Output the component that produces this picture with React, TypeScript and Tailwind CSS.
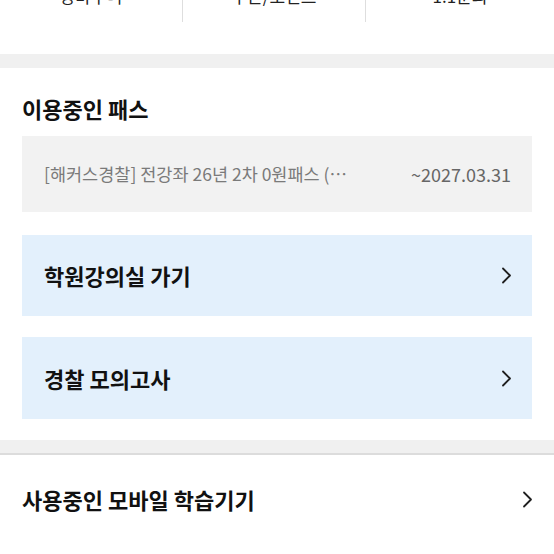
import React from "react";

const FONT = { fontFamily: '"Noto Sans CJK KR", "Noto Sans", sans-serif' };

function Chevron({ className = "" }: { className?: string }) {
  return (
    <svg width="11" height="17" viewBox="0 0 11 17" className={className} fill="none">
      <polyline points="2,1.5 9,8.5 2,15.5" stroke="#1f1f1f" strokeWidth="1.8" strokeLinecap="round" strokeLinejoin="round" />
    </svg>
  );
}

const TOP_MENU = [
  { label: "장바구니", w: "w-[182px]" },
  { label: "쿠폰/포인트", w: "w-[183px]" },
  { label: "1:1문의", w: "flex-1" },
];

export default function App() {
  return (
    <div className="w-[554px] h-[554px] overflow-hidden bg-white text-[#111]" style={FONT}>
      {/* top menu, scrolled past */}
      <div className="h-[54px] overflow-hidden bg-white">
        <div className="flex -mt-[14px]">
          {TOP_MENU.map((t, i) => (
            <div
              key={t.label}
              className={`${t.w} h-[36px] flex justify-center ${i > 0 ? "border-l border-[#dedede]" : ""}`}
            >
              <span className="text-[17px] leading-[20px] text-[#222]">{t.label}</span>
            </div>
          ))}
        </div>
      </div>
      <div className="h-[14px] bg-[#f0f0f0]" />

      {/* pass section */}
      <section className="px-[22px] pt-[25px] pb-[21px]">
        <h2 className="text-[22px] leading-[30px] font-bold">이용중인 패스</h2>
        <div className="mt-[13px] h-[76px] bg-[#f2f2f2] flex items-center justify-between pl-[22px] pr-[21px] text-[17.5px] text-[#7a7a7a]">
          <span className="truncate max-w-[330px]">[해커스경찰] 전강좌 26년 2차 0원패스 (…</span>
          <span className="text-[#666] text-[18px]">~2027.03.31</span>
        </div>
        <button className="mt-[23px] w-full h-[81px] bg-[#e3f0fc] flex items-center justify-between pl-[22px] pr-[20px]">
          <span className="text-[22px] font-bold">학원강의실 가기</span>
          <Chevron />
        </button>
        <button className="mt-[21px] w-full h-[82px] bg-[#e3f0fc] flex items-center justify-between pl-[22px] pr-[20px]">
          <span className="text-[22px] font-bold">경찰 모의고사</span>
          <Chevron />
        </button>
      </section>
      <div className="h-[15px] bg-[#f0f0f0] border-b-2 border-[#dcdcdc]" />

      {/* mobile devices */}
      <button className="w-full h-[88px] flex items-center justify-between pl-[22px] pr-[21px]">
        <span className="text-[22px] font-bold">사용중인 모바일 학습기기</span>
        <Chevron />
      </button>
    </div>
  );
}
